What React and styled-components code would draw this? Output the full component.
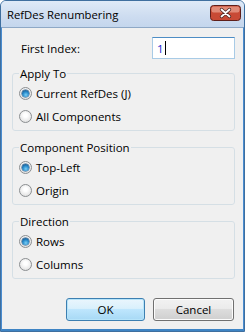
import React from "react";
import styled, { createGlobalStyle } from "styled-components";

const GlobalStyle = createGlobalStyle`
  body {
    margin: 0;
    background: #ffffff;
    font-family: "Open Sans", "Noto Sans", sans-serif;
  }
`;

const Window = styled.div`
  width: 245px;
  height: 332px;
  box-sizing: border-box;
  display: flex;
  flex-direction: column;
  border: 1px solid #3f6f9f;
  border-radius: 6px 6px 0 0;
  background: #c6d9ef;
  overflow: hidden;
`;

const TitleBar = styled.div`
  height: 26px;
  flex: none;
  display: flex;
  align-items: center;
  justify-content: space-between;
  padding: 0 3px 0 6px;
  background: linear-gradient(#dfeaf7, #cddcf0 60%, #c4d6ed);
  font-size: 11.3px;
  color: #000;
`;

const CloseIcon = styled.svg`
  display: block;
  margin-top: -3px;
  flex: none;
`;

const Client = styled.div`
  flex: 1;
  display: flex;
  flex-direction: column;
  background: #f0f0f0;
  border-top: 1px solid #8ea8c6;
  border-left: 1px solid #4a8ccf;
  border-right: 1px solid #4a8ccf;
  border-bottom: 2px solid #3e84c4;
  padding: 9px 8px 0 10px;
  font-size: 11.5px;
  color: #000;
`;

const IndexRow = styled.div`
  display: flex;
  align-items: center;
  justify-content: space-between;
  padding-left: 9px;
  height: 22px;
`;

const TextField = styled.div`
  width: 83px;
  height: 22px;
  box-sizing: border-box;
  display: flex;
  align-items: center;
  padding-left: 4px;
  background: #fff;
  border: 1px solid #a8cbe6;
  border-top-color: #4d8dc5;
  color: #1a1ad0;
`;

const Caret = styled.span`
  width: 1px;
  height: 14px;
  margin-left: 1px;
  background: #000;
`;

const Group = styled.fieldset`
  margin: ${(p) => (p.$first ? "7px" : "9px")} 0 0 0;
  padding: 1px 0 2px 6px;
  border: 1px solid #d5dfe5;
  border-radius: 3px;
  min-width: 0;
`;

const Legend = styled.legend`
  padding: 0 1px;
  line-height: 15px;
`;

const RadioRow = styled.label`
  display: flex;
  align-items: center;
  gap: 4px;
  height: 23px;
`;

const RadioCircle = styled.span`
  width: 13px;
  height: 13px;
  box-sizing: border-box;
  border-radius: 50%;
  border: 1px solid #8b8e91;
  background: radial-gradient(circle at 50% 40%, #ffffff 20%, #dcdcdc 90%);
  display: flex;
  align-items: center;
  justify-content: center;
`;

const RadioDot = styled.span`
  width: 7px;
  height: 7px;
  border-radius: 50%;
  background: radial-gradient(circle at 55% 70%, #7cd0f5 0%, #2a8ccd 45%, #0f3f6e 100%);
  box-shadow: 0 0 0 0.5px #1d4f7c;
`;

const ButtonRow = styled.div`
  display: flex;
  justify-content: flex-end;
  gap: 8px;
  margin-top: 19px;
  padding-right: 1px;
`;

const Button = styled.div`
  width: ${(p) => (p.$wide ? "81px" : "79px")};
  height: 23px;
  box-sizing: border-box;
  display: flex;
  align-items: center;
  justify-content: center;
  border-radius: 3px;
  border: 1px solid ${(p) => (p.$default ? "#3c7fb1" : "#707070")};
  background: ${(p) =>
    p.$default
      ? "linear-gradient(#eaf6fd, #d9f0fc 45%, #bee6fd 50%, #a7d9f5)"
      : "linear-gradient(#f2f2f2, #ebebeb 45%, #dddddd 50%, #cfcfcf)"};
  box-shadow: inset 0 0 0 1px ${(p) => (p.$default ? "#b6e4fa" : "#fcfcfc")};
`;

const Radio = ({ label, checked }) => (
  <RadioRow>
    <RadioCircle>{checked && <RadioDot />}</RadioCircle>
    {label}
  </RadioRow>
);

const CloseButton = () => (
  <CloseIcon width="31" height="16" viewBox="0 0 31 16">
    <rect x="0.5" y="0.5" width="30" height="15" rx="3" fill="#c84a35" stroke="#5e1f1a" />
    <rect x="1.5" y="1.5" width="28" height="6" rx="2" fill="#e08a77" />
    <path d="M11.5 4.5 L19.5 11.5 M19.5 4.5 L11.5 11.5" stroke="#4a2420" strokeWidth="3.4" strokeLinecap="round" />
    <path d="M11.5 4.5 L19.5 11.5 M19.5 4.5 L11.5 11.5" stroke="#ffffff" strokeWidth="1.8" strokeLinecap="round" />
  </CloseIcon>
);

const groups = [
  { title: "Apply To", options: ["Current RefDes (J)", "All Components"] },
  { title: "Component Position", options: ["Top-Left", "Origin"] },
  { title: "Direction", options: ["Rows", "Columns"] },
];

export default function App() {
  return (
    <>
      <GlobalStyle />
      <Window>
        <TitleBar>
          RefDes Renumbering
          <CloseButton />
        </TitleBar>
        <Client>
          <IndexRow>
            First Index:
            <TextField>
              1<Caret />
            </TextField>
          </IndexRow>
          {groups.map((g, i) => (
            <Group key={g.title} $first={i === 0}>
              <Legend>{g.title}</Legend>
              {g.options.map((o, j) => (
                <Radio key={o} label={o} checked={j === 0} />
              ))}
            </Group>
          ))}
          <ButtonRow>
            <Button $default>OK</Button>
            <Button $wide>Cancel</Button>
          </ButtonRow>
        </Client>
      </Window>
    </>
  );
}
